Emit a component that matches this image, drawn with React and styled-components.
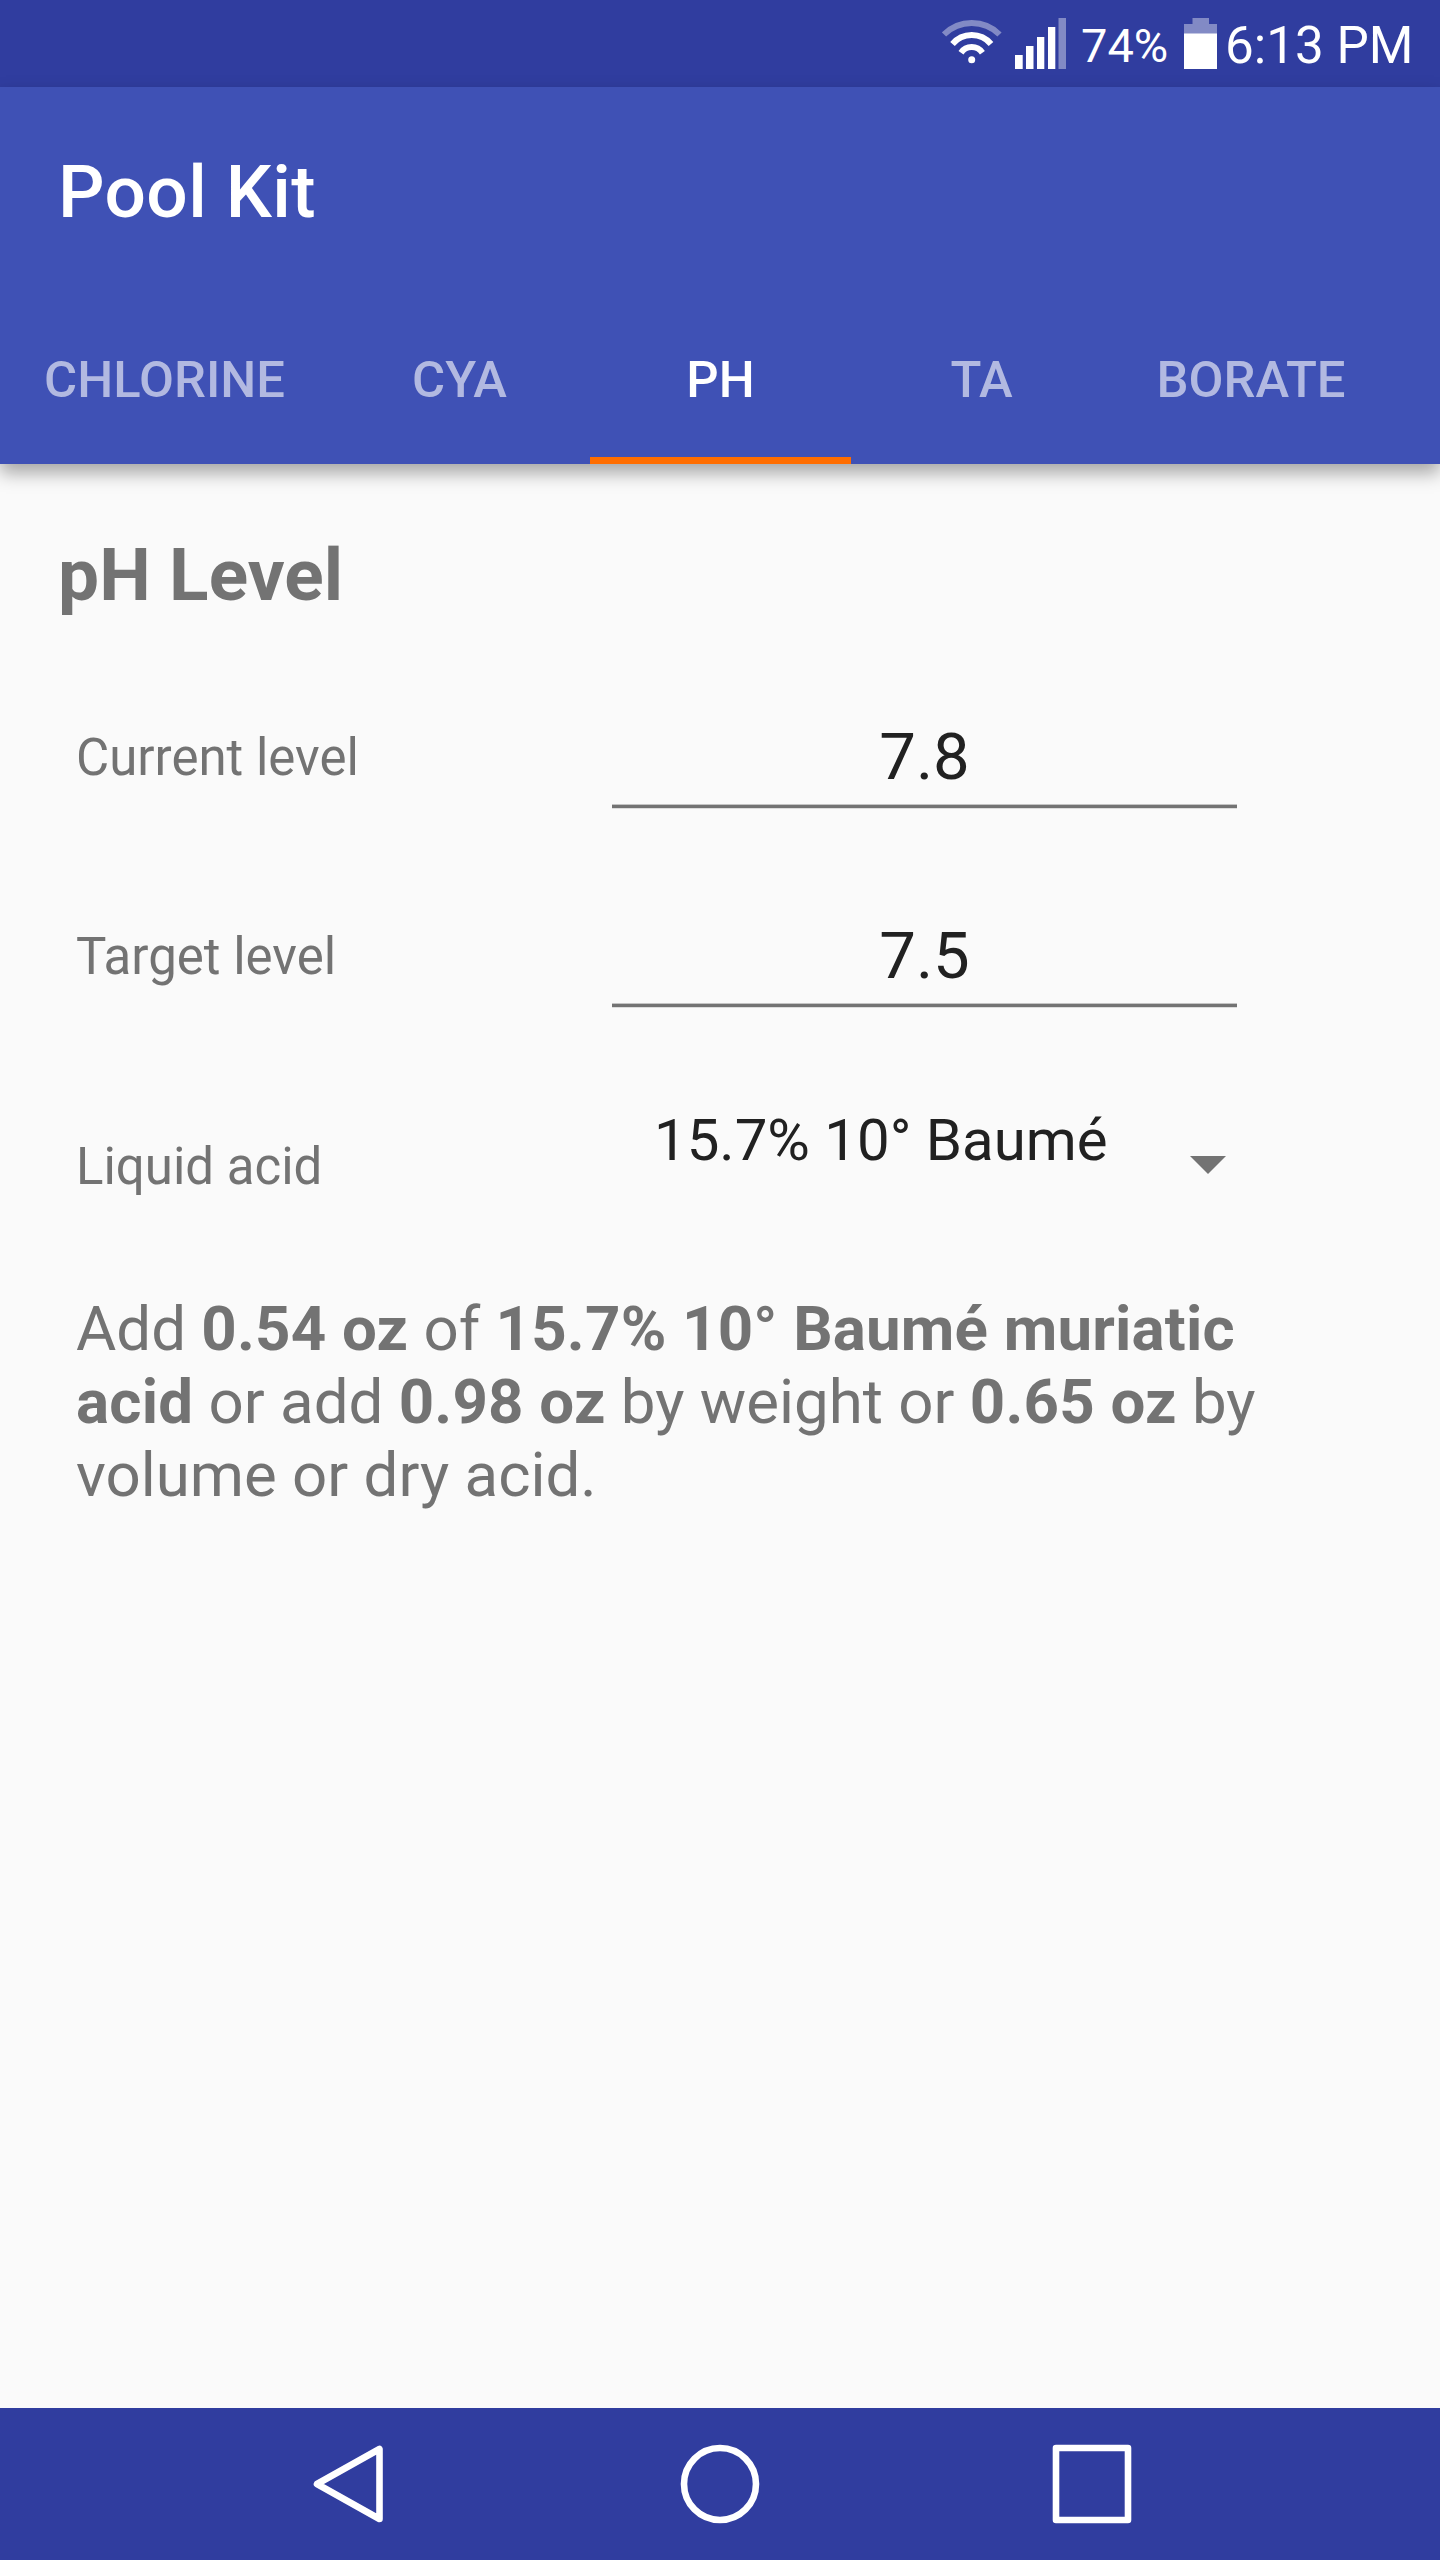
import React from "react";
import styled, { createGlobalStyle } from "styled-components";

const GlobalStyle = createGlobalStyle`
  * {
    box-sizing: border-box;
  }
  body {
    margin: 0;
    font-family: Roboto, "Liberation Sans", sans-serif;
    background: #fafafa;
  }
`;

const Screen = styled.div`
  display: flex;
  flex-direction: column;
  width: 1440px;
  height: 2560px;
  overflow: hidden;
  color: #737373;
`;

/**
 * Status bar
 */
const StatusBar = styled.header`
  display: flex;
  flex: none;
  height: 87px;
  padding: 0 28px 0 942px;
  background: #303d9f;
  color: white;

  svg {
    flex: none;
    display: block;
  }
`;

const WifiIcon = styled.svg`
  width: 60px;
  height: 46px;
  margin-top: 19px;
`;

const SignalIcon = styled.svg`
  width: 52px;
  height: 51px;
  margin: 18px 0 0 13px;
`;

const BatteryText = styled.span`
  width: 87px;
  margin-left: 14px;
  font-size: 47px;
  line-height: 92px;
  white-space: nowrap;
`;

const BatteryIcon = styled.svg`
  width: 33px;
  height: 51px;
  margin: 18px 0 0 16px;
`;

const Clock = styled.span`
  margin-left: 8px;
  font-size: 51.2px;
  line-height: 91px;
  white-space: nowrap;
`;

/**
 * App bar with the tabs below the title
 */
const AppBar = styled.div`
  position: relative;
  flex: none;
  height: 377px;
  background: #3f51b5;
  box-shadow: 0 9px 17px rgba(0, 0, 0, 0.34);
`;

const Title = styled.h1`
  height: 203px;
  margin: 0;
  padding: 8px 58px 0;
  color: white;
  font-size: 73px;
  font-weight: 500;
  line-height: 195px;
  letter-spacing: 0.4px;
`;

const Tabs = styled.nav`
  display: flex;
  height: 174px;
`;

const Tab = styled.div`
  width: ${(props) => props.$width}px;
  height: 174px;
  padding-top: 5px;
  color: ${(props) => (props.$active ? "white" : "#b2b9e1")};
  font-size: 50.75px;
  font-weight: 500;
  line-height: 169px;
  text-align: center;
  box-shadow: ${(props) => (props.$active ? "inset 0 -7px #ff6d00" : "none")};
`;

const Content = styled.main`
  flex: 1;
  padding: 68px 58px 0;
`;

const Heading = styled.h2`
  margin: 0 0 39px;
  font-size: 73px;
  font-weight: 700;
  line-height: 86px;
  letter-spacing: 0.1px;
`;

const Row = styled.div`
  display: grid;
  grid-template-columns: 536px 625px;
  align-items: center;
  height: 199px;
  padding-left: 18px;
`;

const Label = styled.label`
  padding-top: 2px;
  font-size: 51px;
  line-height: 60px;
`;

const Input = styled.input`
  width: 625px;
  height: 103px;
  padding: 2px 0 0;
  border: none;
  border-bottom: 3px solid #737373;
  border-radius: 0;
  outline: none;
  background: none;
  box-shadow: inset 0 -1px #c4c4c4, 0 1px #dcdcdc;
  color: #212121;
  font-family: inherit;
  font-size: 65.25px;
  text-align: center;
`;

const AcidRow = styled(Row)`
  height: 222px;
`;

const Select = styled.div`
  display: flex;
  justify-content: space-between;
  align-items: flex-start;
  height: 70px;
  margin-bottom: 52px;
  padding: 0 11px 0 42px;
  color: #212121;
  font-size: 58.15px;
  line-height: 70px;
  white-space: nowrap;
`;

const Caret = styled.svg`
  width: 36px;
  height: 18px;
  margin-top: 51px;
`;

const Result = styled.p`
  width: 1240px;
  margin: 16px 0 0 18px;
  font-size: 61.8px;
  line-height: 73px;

  b {
    letter-spacing: 0.19px;
  }
`;

const NavBar = styled.footer`
  display: flex;
  flex: none;
  height: 152px;
  padding: 34px 0 0 311px;
  background: #303d9f;

  svg {
    fill: none;
    stroke: white;
    stroke-width: 6.6;
    stroke-linejoin: round;
  }
`;

const NavIcon = styled.svg`
  flex: none;
  width: 84px;
  height: 84px;
  margin-right: ${(props) => props.$gap || 0}px;
`;

const tabs = [
  { name: "CHLORINE", width: 329 },
  { name: "CYA", width: 261 },
  { name: "PH", width: 261 },
  { name: "TA", width: 261 },
  { name: "BORATE", width: 278 },
];

const App = () => {
  return (
    <Screen>
      <GlobalStyle />
      <StatusBar>
        <WifiIcon viewBox="0 0 60 46" fill="none" stroke="white" strokeWidth="6">
          <path d="M2 15.500A39.300 39.300 0 0 1 57.500 15.500" strokeOpacity="0.4" />
          <path d="M10.500 25A25.200 25.200 0 0 1 49 25" />
          <path d="M19 33.700A13 13 0 0 1 40.400 33.700" />
          <circle cx="29.700" cy="40.700" r="3.500" fill="white" stroke="none" />
        </WifiIcon>
        <SignalIcon viewBox="0 0 52 51" fill="white">
          <rect x="0" y="37" width="7.700" height="14" />
          <rect x="11" y="28" width="7.500" height="23" />
          <rect x="22" y="19" width="7.300" height="32" />
          <rect x="33" y="9" width="7.300" height="42" />
          <rect x="43.500" y="0" width="7.500" height="51" fillOpacity="0.4" />
        </SignalIcon>
        <BatteryText>74%</BatteryText>
        <BatteryIcon viewBox="0 0 33 51" fill="white">
          <path d="M8.500 0h16.500v6h8v10H0V6h8.500z" fillOpacity="0.4" />
          <rect y="15.500" width="33" height="35.500" />
        </BatteryIcon>
        <Clock>6:13 PM</Clock>
      </StatusBar>

      <AppBar>
        <Title>Pool Kit</Title>
        <Tabs>
          {tabs.map((tab) => (
            <Tab key={tab.name} $width={tab.width} $active={tab.name === "PH"}>
              {tab.name}
            </Tab>
          ))}
        </Tabs>
      </AppBar>

      <Content>
        <Heading>pH Level</Heading>
        <Row>
          <Label htmlFor="current">Current level</Label>
          <Input id="current" defaultValue="7.8" />
        </Row>
        <Row>
          <Label htmlFor="target">Target level</Label>
          <Input id="target" defaultValue="7.5" />
        </Row>
        <AcidRow>
          <Label>Liquid acid</Label>
          <Select>
            15.7% 10° Baumé
            <Caret viewBox="0 0 36 18">
              <path d="M0 0h36L18 18z" fill="#737373" />
            </Caret>
          </Select>
        </AcidRow>
        <Result>
          Add <b>0.54 oz</b> of <b>15.7% 10° Baumé muriatic acid</b> or add{" "}
          <b>0.98 oz</b> by weight or <b>0.65 oz</b> by volume or dry acid.
        </Result>
      </Content>

      <NavBar>
        <NavIcon viewBox="0 0 84 84" $gap={283}>
          <path d="M6 42L68.500 7v70z" />
        </NavIcon>
        <NavIcon viewBox="0 0 84 84" $gap={288}>
          <circle cx="42" cy="42" r="36" />
        </NavIcon>
        <NavIcon viewBox="0 0 84 84">
          <rect x="6" y="6" width="72" height="72" />
        </NavIcon>
      </NavBar>
    </Screen>
  );
};

export default App;
